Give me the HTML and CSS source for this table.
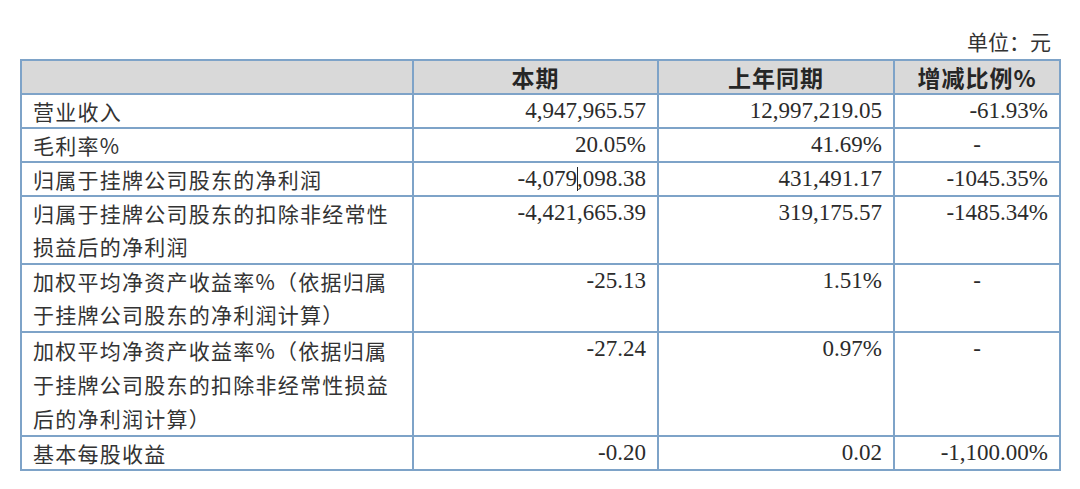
FILE: index.html
```html
<!DOCTYPE html>
<html lang="zh">
<head>
<meta charset="utf-8">
<link rel="stylesheet" href="styles.css">
</head>
<body>
<div class="page">
  <div class="unit">单位：元</div>
  <table class="fin">
    <colgroup>
      <col class="c1"><col class="c2"><col class="c3"><col class="c4">
    </colgroup>
    <thead>
      <tr class="r1">
        <th></th><th>本期</th><th>上年同期</th><th>增减比例%</th>
      </tr>
    </thead>
    <tbody>
      <tr class="r1">
        <td class="lbl">营业收入</td><td class="num">4,947,965.57</td><td class="num">12,997,219.05</td><td class="num">-61.93%</td>
      </tr>
      <tr class="r1">
        <td class="lbl">毛利率%</td><td class="num">20.05%</td><td class="num">41.69%</td><td class="ctr">-</td>
      </tr>
      <tr class="r1">
        <td class="lbl">归属于挂牌公司股东的净利润</td><td class="num">-4,079<span class="caret"></span>,098.38</td><td class="num">431,491.17</td><td class="num">-1045.35%</td>
      </tr>
      <tr class="r2">
        <td class="lbl">归属于挂牌公司股东的扣除非经常性损益后的净利润</td><td class="num">-4,421,665.39</td><td class="num">319,175.57</td><td class="num">-1485.34%</td>
      </tr>
      <tr class="r2">
        <td class="lbl">加权平均净资产收益率%（依据归属于挂牌公司股东的净利润计算）</td><td class="num">-25.13</td><td class="num">1.51%</td><td class="ctr">-</td>
      </tr>
      <tr class="r3">
        <td class="lbl">加权平均净资产收益率%（依据归属于挂牌公司股东的扣除非经常性损益后的净利润计算）</td><td class="num">-27.24</td><td class="num">0.97%</td><td class="ctr">-</td>
      </tr>
      <tr class="r1">
        <td class="lbl">基本每股收益</td><td class="num">-0.20</td><td class="num">0.02</td><td class="num">-1,100.00%</td>
      </tr>
    </tbody>
  </table>
</div>
</body>
</html>
```
FILE: styles.css
```css
html, body {
  margin: 0;
  padding: 0;
  background: #ffffff;
}
.page {
  padding: 26px 0 0 20px;
  width: 1039px;
  color: #2b2b2b;
}
.unit {
  text-align: right;
  font-family: "Noto Sans CJK SC", sans-serif;
  font-size: 21px;
  line-height: 30px;
  padding-right: 8px;
  height: 33px;
  color: #333;
}
.fin {
  border-collapse: collapse;
  width: 1039px;
  table-layout: fixed;
  border: 2px solid #7ea3c8;
}
.c1 { width: 392px; }
.c2 { width: 245px; }
.c3 { width: 236px; }
.c4 { width: 166px; }
.fin th, .fin td {
  border: 2px solid #7ea3c8;
  padding: 0 11px;
  vertical-align: top;
  line-height: 32px;
}
.fin th {
  background: #d9d9d9;
  font-family: "Noto Sans CJK SC", sans-serif;
  font-weight: 700;
  font-size: 23px;
  letter-spacing: 1px;
  text-align: center;
  color: #262626;
}
.fin tr.r1 { height: 34px; }
.lbl {
  font-family: "Noto Sans CJK SC", sans-serif;
  font-size: 21px;
  letter-spacing: 1.25px;
  color: #333;
}
.r2 .lbl { line-height: 33px; }
.r3 .lbl { line-height: 34px; }
.num {
  font-family: "Liberation Serif", "Times New Roman", serif;
  font-size: 23px;
  text-align: right;
  color: #2b2b2b;
}
.ctr {
  font-family: "Liberation Serif", "Times New Roman", serif;
  font-size: 23px;
  text-align: center;
}
.caret {
  display: inline-block;
  width: 1px;
  height: 24px;
  background: #222;
  vertical-align: -5px;
  margin-right: -1px;
}
```
